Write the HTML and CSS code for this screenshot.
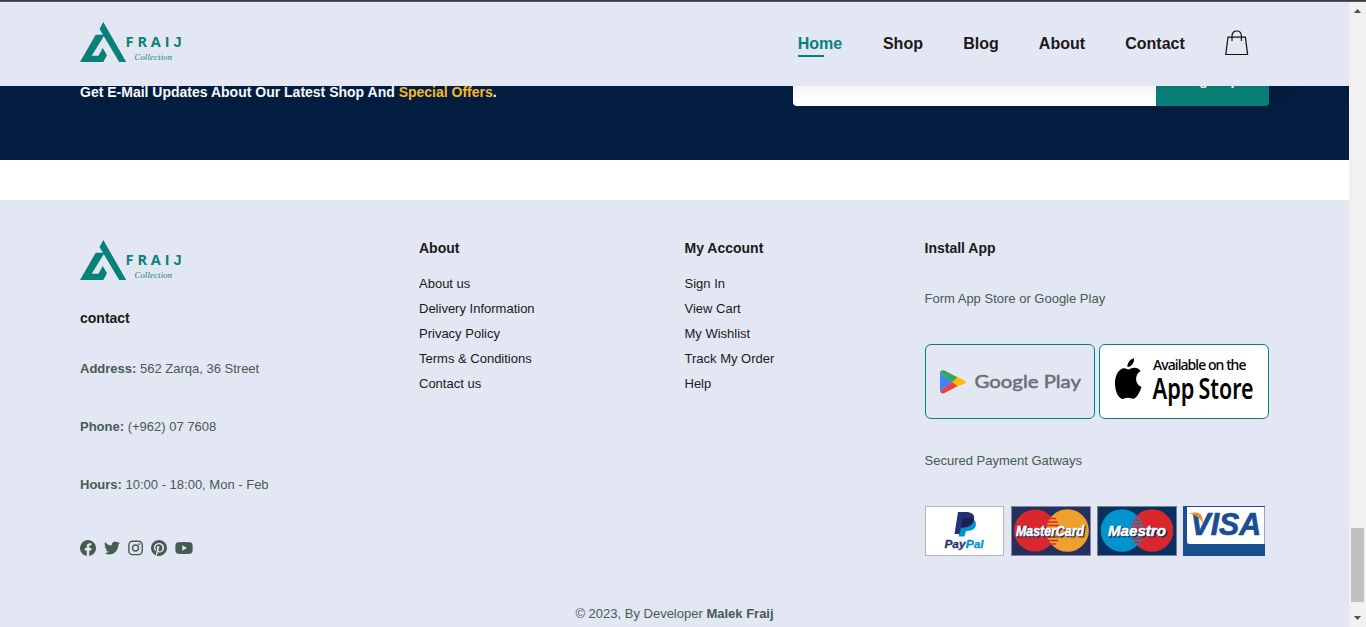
FILE: index.html
```html
<!DOCTYPE html>
<html lang="en">
<head>
<meta charset="utf-8">
<title>Fraij Collection</title>
<link rel="stylesheet" href="styles.css">
</head>
<body>
<svg class="defs" width="0" height="0" aria-hidden="true">
  <symbol id="logo" viewBox="0 0 104 42">
    <path fill="#088178" d="M23.300 0 46.200 40H39.200L19.500 7ZM15.700 12.700H24.700L11.700 33.700H18.500L22.700 26 27 33.300 23.300 40H0Z"/>
    <g fill="#088178" font-family="'Open Sans'" font-weight="700" font-size="14.500">
      <text x="45.400" y="25.300">F</text><text x="57.400" y="25.300">R</text><text x="70.800" y="25.300">A</text><text x="84.800" y="25.300">I</text><text x="93.500" y="25.300" font-family="'Liberation Sans'">J</text>
    </g>
    <text x="54.500" y="38.400" fill="#088178" font-family="'Liberation Serif'" font-style="italic" font-size="8.500" textLength="37.500">Collection</text>
  </symbol>
</svg>
<div class="window-edge"></div>
<div class="viewport">
  <div class="page">
    <header class="header">
      <svg class="logo"><use href="#logo"/></svg>
      <nav class="nav">
        <a class="active">Home</a><a>Shop</a><a>Blog</a><a>About</a><a>Contact</a>
        <svg class="bag" viewBox="0 0 24 26" fill="none" stroke="#111" stroke-width="1.200"><path d="M3 7.200H20.400L22.600 24.500H.8Z"/><path d="M7 11V6.200C7 3 9 1 11.700 1S16.400 3 16.400 6.200V11"/></svg>
      </nav>
    </header>
    <section class="newsletter">
      <p>Get E-Mail Updates About Our Latest Shop And <span>Special Offers</span>.</p>
      <div class="form"><div class="field"></div><button>Sign Up</button></div>
    </section>
    <footer class="footer">
      <div class="columns">
        <div class="col contact">
          <svg class="logo"><use href="#logo"/></svg>
          <h4>contact</h4>
          <p><b>Address:</b> 562 Zarqa, 36 Street</p>
          <p><b>Phone:</b> (+962) 07 7608</p>
          <p><b>Hours:</b> 10:00 - 18:00, Mon - Feb</p>
          <div class="social">
            <svg width="16" height="16" viewBox="0 0 16 16"><path d="M16 8.05A8 8 0 1 0 6.750 16v-5.600H4.720V8.050h2.030V6.280c0-2 1.200-3.120 3.020-3.120.88 0 1.800.16 1.800.16V5.300h-1.020c-1 0-1.300.62-1.300 1.260v1.500h2.220l-.36 2.330H9.250V16A8 8 0 0 0 16 8.050Z"/></svg>
            <svg width="16" height="16" viewBox="0 0 16 16"><path d="M5 14.500c6 0 9.300-5 9.300-9.300v-.4A6.700 6.700 0 0 0 16 3.100a6.500 6.500 0 0 1-1.900.5 3.300 3.300 0 0 0 1.400-1.800 6.600 6.600 0 0 1-2.100.8 3.300 3.300 0 0 0-5.600 3A9.300 9.300 0 0 1 1.100 2.200a3.300 3.300 0 0 0 1 4.400 3.300 3.300 0 0 1-1.500-.4 3.300 3.300 0 0 0 2.600 3.200 3.300 3.300 0 0 1-1.500.1 3.300 3.300 0 0 0 3.100 2.300A6.600 6.600 0 0 1 0 13.100a9.300 9.300 0 0 0 5 1.400Z"/></svg>
            <svg width="15" height="16" viewBox="0 0 15 16"><rect x=".9" y="1.300" width="13.300" height="13.300" rx="3.600" fill="none" stroke="#465b52" stroke-width="1.400"/><circle cx="7.500" cy="8" r="3" fill="none" stroke="#465b52" stroke-width="1.400"/><circle cx="11.300" cy="4.200" r=".9"/></svg>
            <svg width="16" height="16" viewBox="0 0 16 16"><path d="M8 0a8 8 0 0 0-2.900 15.450c-.07-.63-.13-1.600.03-2.300l.94-3.970s-.24-.48-.24-1.190c0-1.110.650-1.940 1.450-1.940.68 0 1.010.51 1.010 1.130 0 .69-.44 1.720-.66 2.670-.19.8.4 1.450 1.190 1.450 1.420 0 2.520-1.500 2.520-3.670 0-1.920-1.380-3.260-3.350-3.260-2.280 0-3.620 1.710-3.620 3.480 0 .69.27 1.430.6 1.830.06.080.07.15.05.230l-.22.910c-.04.150-.12.180-.27.110-1-.46-1.620-1.920-1.620-3.100 0-2.520 1.830-4.840 5.280-4.840 2.770 0 4.930 1.980 4.930 4.620 0 2.750-1.740 4.970-4.150 4.970-.81 0-1.570-.42-1.830-.92l-.5 1.900c-.18.690-.67 1.560-1 2.090A8 8 0 1 0 8 0Z"/></svg>
            <svg width="18" height="16" viewBox="0 0 18 16"><path fill-rule="evenodd" d="M3 2.200Q9 1.700 15 2.200Q17.300 2.400 17.500 4.500Q17.900 8 17.500 11.500Q17.300 13.600 15 13.800Q9 14.300 3 13.800Q.7 13.600.5 11.500Q.1 8 .5 4.500Q.7 2.400 3 2.200ZM7.300 5.300V10.700L11.900 8Z"/></svg>
          </div>
        </div>
        <div class="col links">
          <h4>About</h4>
          <a>About us</a><a>Delivery Information</a><a>Privacy Policy</a><a>Terms &amp; Conditions</a><a>Contact us</a>
        </div>
        <div class="col links">
          <h4>My Account</h4>
          <a>Sign In</a><a>View Cart</a><a>My Wishlist</a><a>Track My Order</a><a>Help</a>
        </div>
        <div class="col install">
          <h4>Install App</h4>
          <p>Form App Store or Google Play</p>
          <div class="stores">
            <div class="store">
              <svg viewBox="0 0 168 73">
                <path fill="#4285f4" d="M14 27.500V46.500L26.500 37Z"/>
                <path fill="#34a853" d="M14 27.500Q14.500 24.500 18.500 25.500L32 32.500 26.500 37.200Z"/>
                <path fill="#ea4335" d="M14 46.500Q15.500 49.500 19 47.800L32 41 26.500 36.800Z"/>
                <path fill="#fbbc04" d="M31.500 32.300 38 35.300Q41.500 37.200 38 39L31.500 41.300 26 37Z"/>
                <text x="48.500" y="43" font-family="Lato" font-size="17.500" fill="#6b6e72" stroke="#6b6e72" stroke-width=".5" textLength="106.500" lengthAdjust="spacingAndGlyphs">Google Play</text>
              </svg>
            </div>
            <div class="store white">
              <svg viewBox="0 0 168 73">
                <path d="M27.500 22C27 18 30.500 13.800 34 13.200C34.600 17.500 31.500 21.700 27.500 22ZM28 24.600C30 24.500 31.500 22.700 34.500 22.800C37 22.800 39 24 40.500 26C34 30 35 39.500 41.500 42C40 46.500 37 53 33.500 53.800C31.500 54 30.500 52.800 28 52.800S24.500 54 22.500 54C17.500 53 14.800 44.500 15 37.500C15.200 29 19.500 23.500 24 23.200C26 23.200 27 24.300 28 24.600Z"/>
                <g font-family="'Noto Sans'"><text x="53" y="24.600" font-size="14" font-weight="500" textLength="93.500">Available on the</text>
                <text x="52.500" y="54" font-size="28.500" font-weight="600" textLength="42" lengthAdjust="spacingAndGlyphs">App</text><text x="98.500" y="54" font-size="28.500" font-weight="600" textLength="55" lengthAdjust="spacingAndGlyphs">Store</text></g>
              </svg>
            </div>
          </div>
          <p>Secured Payment Gatways</p>
          <svg class="pay" viewBox="0 0 341 50" width="341" height="50">
            <rect x=".5" y=".5" width="78" height="49" fill="#fff" stroke="#b4b5bd"/>
            <path fill="#0094cf" d="M37 13H47Q53 15 50 21.500Q48 25 41 25L39.500 30.500H33.500Z"/>
            <path fill="#253272" d="M33 6H43Q50.500 7 49 14Q47 21.500 38 21.500H36L34.500 28H29.500Z"/>
            <path fill="#1b1f52" d="M38 12H46L49 13Q47.500 21.500 38 21.500H36Z"/>
            <g font-family="'Liberation Sans'" font-style="italic" font-weight="700" font-size="11.500" stroke-width=".3"><text x="19.500" y="41.800" fill="#253272" stroke="#253272" textLength="21" lengthAdjust="spacingAndGlyphs">Pay</text><text x="40.700" y="41.800" fill="#0094cf" stroke="#0094cf" textLength="18" lengthAdjust="spacingAndGlyphs">Pal</text></g>
            <rect x="86.500" y=".5" width="79" height="49" fill="#26305e" stroke="#83869f"/>
            <circle cx="110" cy="24.500" r="21" fill="#d9272e"/><circle cx="142.500" cy="24.500" r="21.300" fill="#eea02f"/>
            <path stroke="#d9272e" stroke-width="1.700" d="M122 12.500H131M120 16H133M119 19.500H134M119 31H134M120 34.500H133M122 38H131"/>
            <g font-family="'Liberation Sans'" font-style="italic" font-weight="700" font-size="15.500"><text x="92" y="31" fill="#26305e" stroke="#26305e" textLength="68" lengthAdjust="spacingAndGlyphs">MasterCard</text><text x="91" y="30" fill="#fff" stroke="#fff" stroke-width=".5" textLength="68" lengthAdjust="spacingAndGlyphs">MasterCard</text></g>
            <rect x="172.500" y=".5" width="79" height="49" fill="#09305f" stroke="#777e9c"/>
            <circle cx="197" cy="24.500" r="21.300" fill="#0094cf"/><circle cx="227" cy="24.500" r="21.300" fill="#d9272e"/>
            <path stroke="#0094cf" stroke-width="1.700" d="M208 12.500H215M206 16H217M205 19.500H218M205 31H218M206 34.500H217M208 38H215"/>
            <g font-family="'Liberation Sans'" font-style="italic" font-weight="700" font-size="15.500"><text x="184" y="31" fill="#09305f" stroke="#09305f" textLength="58" lengthAdjust="spacingAndGlyphs">Maestro</text><text x="183" y="30" fill="#fff" stroke="#fff" stroke-width=".5" textLength="58" lengthAdjust="spacingAndGlyphs">Maestro</text></g>
            <rect x="258" width="82" height="50" fill="#194e91"/><path fill="#fff" d="M262 1H339.500V38H264.500Q262 38 262 35.500Z"/>
            <text x="265.500" y="29.300" fill="#194e91" stroke="#194e91" stroke-width=".7" font-family="'Liberation Sans'" font-style="italic" font-weight="700" font-size="31" textLength="70.500" lengthAdjust="spacingAndGlyphs">VISA</text>
            <path fill="#ee8e2d" d="M263.500 7H272Q276 7 277 11L278.500 18Q274 9.500 263.500 7Z"/>
          </svg>
        </div>
      </div>
      <p class="copyright">© 2023, By Developer <b>Malek Fraij</b></p>
    </footer>
  </div>
  <div class="scrollbar">
    <svg width="17" height="17"><path fill="#505050" d="M5 11 8.500 7 12 11Z"/></svg>
    <div class="thumb"></div>
    <svg width="17" height="17"><path fill="#505050" d="M5 6 8.500 10 12 6Z"/></svg>
  </div>
</div>
</body>
</html>
```
FILE: styles.css
```css
* { box-sizing: border-box; margin: 0; padding: 0; }
body { height: 627px; overflow: hidden; font-family: "Liberation Sans", Arial, sans-serif; background: #fff; color: #1a1a1a; }
svg { display: block; }
.defs { position: absolute; }
.window-edge { height: 2px; background: #3c3c3e; border-bottom: 1px solid #59595b; }
.viewport { display: flex; height: 625px; }
.page { width: 1349px; overflow: hidden; }
.logo { width: 104px; height: 42px; }
.header { position: relative; z-index: 2; display: flex; justify-content: space-between; height: 84px; padding: 20px 100px 0 80px; background: #e3e6f3; box-shadow: 0 5px 15px rgba(0, 0, 0, .06); }
.nav { display: flex; gap: 40.2px; padding-top: 12px; font-size: 16px; font-weight: 600; line-height: 20px; }
.nav a { height: 23px; }
.nav .active { width: 45px; color: #088178; background: linear-gradient(#088178, #088178) 0 100% / 26px 2px no-repeat; }
.bag { width: 24px; height: 26px; margin-top: -4px; }
.newsletter { display: flex; justify-content: space-between; align-items: flex-end; height: 128px; margin-top: -54px; padding: 0 80px 54px; background: #041e42; }
.newsletter p { margin-bottom: 4px; color: #fff; font-size: 14px; font-weight: 600; line-height: 20px; }
.newsletter span { color: #ffbd27; }
.form { display: flex; width: 476px; height: 50px; }
.field { flex: 1; background: #fff; border-radius: 4px 0 0 4px; }
.form button { width: 113px; padding-bottom: 3px; border: 0; border-radius: 0 4px 4px 0; background: #088178; color: #fff; font: 600 14px "Liberation Sans", Arial, sans-serif; box-shadow: 10px 5px 24px rgba(0, 0, 0, .06); }
.footer { height: 427px; margin-top: 40px; padding: 40px 80px 0; background: #e3e6f3; }
.columns { display: grid; grid-template-columns: 339px 265.5px 240px 1fr; height: 316px; }
.footer h4 { font-size: 14px; line-height: 16px; color: #1a1a1a; }
.footer p { color: #465b52; font-size: 13px; line-height: 20px; }
.contact .logo { margin-bottom: 28px; }
.contact h4 { margin-bottom: 33px; }
.contact p { margin-bottom: 38px; }
.social { display: flex; gap: 8px; margin-top: 45px; fill: #465b52; }
.links h4 { margin-bottom: 15px; }
.links a { display: block; color: #1a1a1a; font-size: 13px; line-height: 25px; }
.install h4 { margin-bottom: 33px; }
.stores { display: flex; gap: 4px; margin: 35px 0 32px; padding-left: .5px; }
.store { width: 170px; height: 75px; border: 1px solid #088178; border-radius: 6px; }
.white { background: #fff; }
.pay { margin: 35px 0 0 .5px; }
.footer .copyright { margin-top: 48px; text-align: center; }
.scrollbar { display: flex; flex-direction: column; width: 17px; background: #f1f1f1; }
.thumb { width: 13px; height: 74px; margin: auto 2px 8px; background: #c1c1c1; }
```
